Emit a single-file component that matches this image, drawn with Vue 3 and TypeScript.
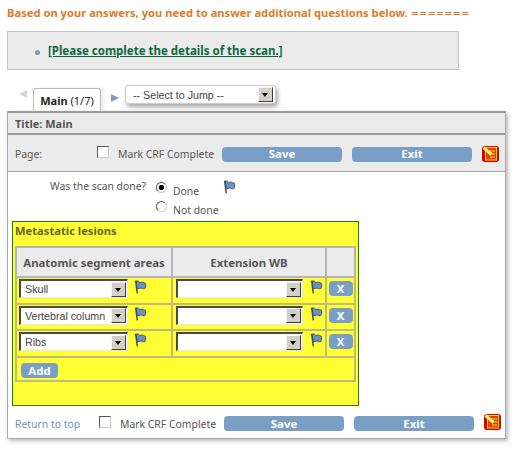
<script setup lang="ts">
interface LesionRow {
  area: string
}

const rows: LesionRow[] = [{ area: 'Skull' }, { area: 'Vertebral column' }, { area: 'Ribs' }]
</script>

<template>
  <div class="page">
    <p class="notice">Based on your answers, you need to answer additional questions below. <span class="eq">=======</span></p>

    <div class="message">
      <span class="bullet"></span>
      <a class="msg-link" href="#">[Please complete the details of the scan.]</a>
    </div>

    <div class="tabbar">
      <span class="arrow-left"></span>
      <div class="tab"><b>Main</b> (1/7)</div>
      <span class="arrow-right"></span>
      <div class="select jump">
        <span class="select-text">-- Select to Jump --</span>
        <span class="select-btn"></span>
      </div>
    </div>

    <div class="panel">
      <div class="title-row">Title: Main</div>
      <div class="page-row">
        <span class="page-label">Page:</span>
        <input class="check" type="checkbox" />
        <span class="mark">Mark CRF Complete</span>
        <button class="btn wide save">Save</button>
        <button class="btn wide exit">Exit</button>
        <svg class="crf-icon" viewBox="0 0 17 16">
          <rect width="17" height="16" rx="3" fill="#e00000" />
          <rect x="3.5" y="1.5" width="11" height="12.500" fill="#d84800" stroke="#ffd820" />
          <path d="M7 5h6M8 8h5M8 11h5" stroke="#ffd820" stroke-width="1" />
          <path d="M1.500 1.500l8 7" stroke="#fff070" stroke-width="3" />
        </svg>
      </div>

      <div class="question">
        <span class="q-label">Was the scan done?</span>
        <div class="q-options">
          <label class="radio-line">
            <input class="radio" type="radio" name="done" checked />
            <span class="radio-text">Done</span>
          </label>
          <label class="radio-line">
            <input class="radio" type="radio" name="done" />
            <span class="radio-text">Not done</span>
          </label>
        </div>
        <svg class="flag q-flag" viewBox="0 0 12 13">
          <path d="M1.500 .5l1.500 12" stroke="#4a5444" stroke-width="1.400" fill="none" />
          <path d="M2 1c1.500-.5 3 .5 3.500 1.500.5-.5 1-.5 2-.5s2 1 3 1c.5 1.500.5 4-.5 5-1.500.5-3-.5-4-.5-1 .5-2 .5-3 .5z" fill="#6a92c6" stroke="#2f4f78" stroke-width=".9" />
        </svg>
      </div>

      <div class="lesions">
        <div class="lesions-title">Metastatic lesions</div>
        <table class="grid">
          <thead>
            <tr>
              <th class="col-a">Anatomic segment areas</th>
              <th class="col-b">Extension WB</th>
              <th class="col-c"></th>
            </tr>
          </thead>
          <tbody>
            <tr v-for="row in rows" :key="row.area">
              <td>
                <div class="cell">
                  <div class="select area">
                    <span class="select-text">{{ row.area }}</span>
                    <span class="select-btn"></span>
                  </div>
                  <svg class="flag" viewBox="0 0 12 13">
                    <path d="M1.500 .5l1.500 12" stroke="#4a5444" stroke-width="1.400" fill="none" />
                    <path d="M2 1c1.500-.5 3 .5 3.500 1.500.5-.5 1-.5 2-.5s2 1 3 1c.5 1.500.5 4-.5 5-1.500.5-3-.5-4-.5-1 .5-2 .5-3 .5z" fill="#6a92c6" stroke="#2f4f78" stroke-width=".9" />
                  </svg>
                </div>
              </td>
              <td>
                <div class="cell">
                  <div class="select ext">
                    <span class="select-text"></span>
                    <span class="select-btn"></span>
                  </div>
                  <svg class="flag" viewBox="0 0 12 13">
                    <path d="M1.500 .5l1.500 12" stroke="#4a5444" stroke-width="1.400" fill="none" />
                    <path d="M2 1c1.500-.5 3 .5 3.500 1.500.5-.5 1-.5 2-.5s2 1 3 1c.5 1.500.5 4-.5 5-1.500.5-3-.5-4-.5-1 .5-2 .5-3 .5z" fill="#6a92c6" stroke="#2f4f78" stroke-width=".9" />
                  </svg>
                </div>
              </td>
              <td><button class="btn small">X</button></td>
            </tr>
            <tr class="add-row">
              <td colspan="3"><button class="btn add">Add</button></td>
            </tr>
          </tbody>
        </table>
      </div>

      <div class="footer">
        <a class="top-link" href="#">Return to top</a>
        <input class="check" type="checkbox" />
        <span class="mark">Mark CRF Complete</span>
        <button class="btn wide save">Save</button>
        <button class="btn wide exit">Exit</button>
        <svg class="crf-icon foot-icon" viewBox="0 0 17 16">
          <rect width="17" height="16" rx="3" fill="#e00000" />
          <rect x="3.5" y="1.5" width="11" height="12.500" fill="#d84800" stroke="#ffd820" />
          <path d="M7 5h6M8 8h5M8 11h5" stroke="#ffd820" stroke-width="1" />
          <path d="M1.500 1.500l8 7" stroke="#fff070" stroke-width="3" />
        </svg>
      </div>
    </div>
  </div>
</template>

<style>
html,
body {
  margin: 0;
  background: #fff;
}
</style>

<style scoped>
.page {
  width: 520px;
  height: 454px;
  overflow: hidden;
  box-sizing: border-box;
  padding: 5px 0 0 7px;
  font-family: "Noto Sans", Tahoma, sans-serif;
  font-size: 10.400px;
  color: #555;
}

.notice {
  margin: 0;
  height: 15px;
  line-height: 15px;
  font-size: 11.200px;
  font-weight: bold;
  color: #de7b2a;
  white-space: nowrap;
}

.eq {
  font-family: "DejaVu Sans", sans-serif;
  font-size: 10px;
  font-weight: normal;
}

.message {
  margin-top: 11px;
  width: 423px;
  height: 37px;
  border: 1px solid #c4c4c4;
  background: #ebebeb;
  display: flex;
  align-items: center;
  padding-left: 27px;
}

.bullet {
  width: 5px;
  height: 5px;
  border-radius: 50%;
  background: #7b9ec6;
  margin-right: 8px;
  margin-top: 3px;
}

.msg-link {
  font-size: 11.500px;
  font-weight: bold;
  color: #0b6a3d;
  text-decoration: underline;
}

.tabbar {
  display: flex;
  align-items: flex-start;
  height: 42px;
  margin-top: 15px;
  padding-left: 12px;
}

.arrow-left {
  width: 0;
  height: 0;
  border-top: 4px solid transparent;
  border-bottom: 4px solid transparent;
  border-right: 8px solid #d4d4d4;
  margin-top: 5px;
  margin-right: 6px;
}

.tab {
  width: 66px;
  height: 22px;
  margin-top: 3px;
  border: 1px solid #bbb;
  border-bottom: none;
  border-radius: 3px 3px 0 0;
  background: #fff;
  line-height: 24px;
  text-align: center;
  color: #222;
  font-size: 11px;
  white-space: nowrap;
  box-shadow: 3px 0 3px #eee;
}

.arrow-right {
  width: 0;
  height: 0;
  border-top: 4px solid transparent;
  border-bottom: 4px solid transparent;
  border-left: 8px solid #7b9ec6;
  margin: 9px 6px 0 10px;
}

.select {
  display: flex;
  align-items: center;
  justify-content: space-between;
  box-sizing: border-box;
  background: #fff;
  border-style: solid;
  border-width: 2px 1px 1px 2px;
  border-color: #4a4a44 #e8e8e0 #e8e8e0 #4a4a44;
  font-family: "Liberation Sans", Arial, sans-serif;
  color: #444;
  font-size: 10.700px;
  padding-left: 4px;
  padding-right: 1px;
}

.select-text {
  white-space: nowrap;
  overflow: hidden;
}

.select-btn {
  position: relative;
  flex: none;
  width: 15px;
  height: 15px;
  box-sizing: border-box;
  background: #d4d0c8;
  border-style: solid;
  border-width: 1px;
  border-color: #f4f4f0 #404040 #404040 #f4f4f0;
}

.select-btn::after {
  content: "";
  position: absolute;
  left: 3px;
  top: 5px;
  border-top: 4px solid #000;
  border-left: 3.500px solid transparent;
  border-right: 3.500px solid transparent;
}

.jump {
  width: 151px;
  height: 19px;
  border: 1px solid #ccc;
  border-radius: 3px;
  box-shadow: 2px 3px 4px #aaa;
  padding-left: 7px;
  padding-right: 2px;
}

.panel {
  width: 499px;
  height: 328px;
  margin-top: -16px;
  position: relative;
  box-sizing: border-box;
  border: 1px solid #a8a8a8;
  border-top: none;
  background: #fff;
  box-shadow: 2px 2px 4px #bbb;
}

.title-row {
  height: 24px;
  box-sizing: border-box;
  background: #ebebeb;
  border-top: 2px solid #9a9a9a;
  border-bottom: 2px solid #9a9a9a;
  line-height: 22px;
  padding-left: 7px;
  font-size: 11px;
  font-weight: bold;
  color: #555;
}

.page-row {
  height: 37px;
  box-sizing: border-box;
  background: #ebebeb;
  border-bottom: 1px solid #a8a8a8;
  display: flex;
  align-items: center;
  padding-left: 7px;
  padding-top: 2px;
}

.page-label {
  width: 76px;
  flex: none;
}

.check {
  appearance: none;
  margin: 0 9px 4px 6px;
  width: 12px;
  height: 12px;
  flex: none;
  box-sizing: border-box;
  background: #fff;
  border: 1px solid #555;
  border-right-color: #ccc;
  border-bottom-color: #ccc;
}

.mark {
  width: 104px;
  flex: none;
  white-space: nowrap;
}

.btn {
  border: none;
  border-radius: 4px;
  background: #7a9fc6;
  color: #fff;
  font-family: "Noto Sans", Tahoma, sans-serif;
  font-weight: bold;
  padding: 0;
  font-size: 11.400px;
}

.wide {
  width: 120px;
  height: 15px;
  line-height: 14px;
  flex: none;
}

.save {
  margin-right: 10px;
}

.crf-icon {
  width: 17px;
  height: 16px;
  margin-left: 10px;
  flex: none;
}

.question {
  display: flex;
  height: 49px;
  position: relative;
}

.q-label {
  margin: 7px 0 0 42px;
  white-space: nowrap;
  width: 106px;
}

.q-options {
  display: flex;
  flex-direction: column;
  margin-top: 10px;
  width: 62px;
}

.radio-line {
  display: flex;
  height: 19px;
}

.radio {
  appearance: none;
  width: 11px;
  height: 11px;
  margin: 0 6px 0 0;
  border: 1px solid #555;
  border-right-color: #ccc;
  border-bottom-color: #ccc;
  border-radius: 50%;
  box-sizing: border-box;
  background: #fff;
  flex: none;
}

.radio:checked {
  background: radial-gradient(circle, #000 2.500px, #fff 3px);
}

.radio-text {
  margin-top: 2px;
  white-space: nowrap;
}

.q-flag {
  margin: 8px 0 0 5px;
}

.flag {
  width: 13px;
  height: 14px;
  flex: none;
}

.lesions {
  width: 347px;
  height: 185px;
  margin-left: 4px;
  box-sizing: border-box;
  background: #ffff33;
  border: 1px solid #2b7a00;
  padding: 0 2px;
}

.lesions-title {
  height: 24px;
  line-height: 18px;
  font-size: 11.200px;
  font-weight: bold;
  color: #666622;
}

.grid {
  border-collapse: collapse;
  table-layout: fixed;
  width: 341px;
}

.grid th,
.grid td {
  border: 2px solid #bcbc7c;
  padding: 0;
}

.grid th {
  background: #ebebeb;
  height: 28px;
  font-size: 11.400px;
  color: #555;
  border-color: #b4b4b4;
}

.col-a {
  width: 154px;
}

.col-b {
  width: 152px;
}

.grid tbody td {
  height: 24.500px;
  vertical-align: top;
}

.cell {
  display: flex;
  align-items: flex-start;
  gap: 6px;
  padding: 1px 0 0 2px;
}

.cell .flag {
  margin-top: 1px;
}

.area {
  width: 109px;
  height: 19px;
}

.ext {
  width: 127px;
  height: 19px;
  margin: 0 1px;
}

.small {
  display: block;
  width: 24px;
  height: 15px;
  margin: 3px auto 0;
}

.add {
  display: block;
  width: 37px;
  height: 15px;
  margin: 5px 0 0 4px;
}

.add-row td {
  height: 22px !important;
}

.footer {
  display: flex;
  align-items: center;
  height: 33px;
  padding-left: 7px;
  padding-top: 1px;
}

.top-link {
  width: 78px;
  flex: none;
  color: #6f93bb;
  text-decoration: none;
  white-space: nowrap;
}

.footer .foot-icon {
  margin-top: -4px;
}
</style>
